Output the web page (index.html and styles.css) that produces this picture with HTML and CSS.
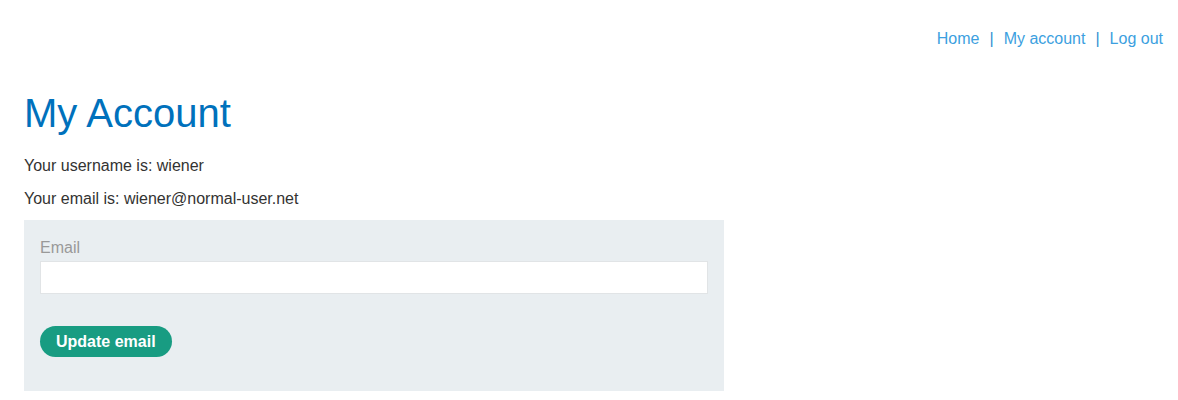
FILE: index.html
```html
<!DOCTYPE html>
<html>
<head>
<meta charset="utf-8">
<link rel="stylesheet" href="styles.css">
</head>
<body>
<header class="top-nav">
  <a href="#">Home</a><span class="sep">|</span><a href="#">My account</a><span class="sep">|</span><a href="#">Log out</a>
</header>
<main class="content">
  <h1 class="title">My Account</h1>
  <p class="info">Your username is: wiener</p>
  <p class="info">Your email is: wiener@normal-user.net</p>
  <form class="email-form">
    <label class="label">Email</label>
    <input class="field" type="email">
    <button class="btn" type="button">Update email</button>
  </form>
</main>
</body>
</html>
```
FILE: styles.css
```css
html, body {
  margin: 0;
  padding: 0;
  background: #fff;
  font-family: "Liberation Sans", Arial, sans-serif;
  color: #333332;
}
.top-nav {
  display: flex;
  justify-content: flex-end;
  align-items: center;
  padding: 30px 15px 0 0;
  font-size: 16px;
  line-height: 18px;
}
.top-nav a {
  color: #3c9fe0;
  text-decoration: none;
}
.sep {
  color: #2f8fd2;
  margin: 0 10px;
}
.content {
  padding: 0 24px;
}
.title {
  margin: 42px 0 0;
  font-size: 40px;
  font-weight: normal;
  line-height: 46px;
  color: #0071bc;
}
.info {
  margin: 0;
  font-size: 16px;
  line-height: 18px;
}
.title + .info {
  margin-top: 21px;
}
.info + .info {
  margin-top: 15px;
}
.email-form {
  margin-top: 12px;
  width: 700px;
  box-sizing: border-box;
  background: #e9eef1;
  padding: 19px 16px 34px;
  display: flex;
  flex-direction: column;
  align-items: flex-start;
}
.label {
  color: #999;
  font-size: 16px;
  line-height: 18px;
}
.field {
  margin: 4px 0 0;
  width: 100%;
  height: 33px;
  box-sizing: border-box;
  border: 1px solid #e1e4e6;
  background: #fff;
  padding: 0 8px;
}
.btn {
  margin-top: 32px;
  height: 31px;
  padding: 0 16px;
  border: none;
  border-radius: 16px;
  background: #189c82;
  color: #fff;
  font-family: "Liberation Sans", Arial, sans-serif;
  font-weight: bold;
  font-size: 16px;
}
```
